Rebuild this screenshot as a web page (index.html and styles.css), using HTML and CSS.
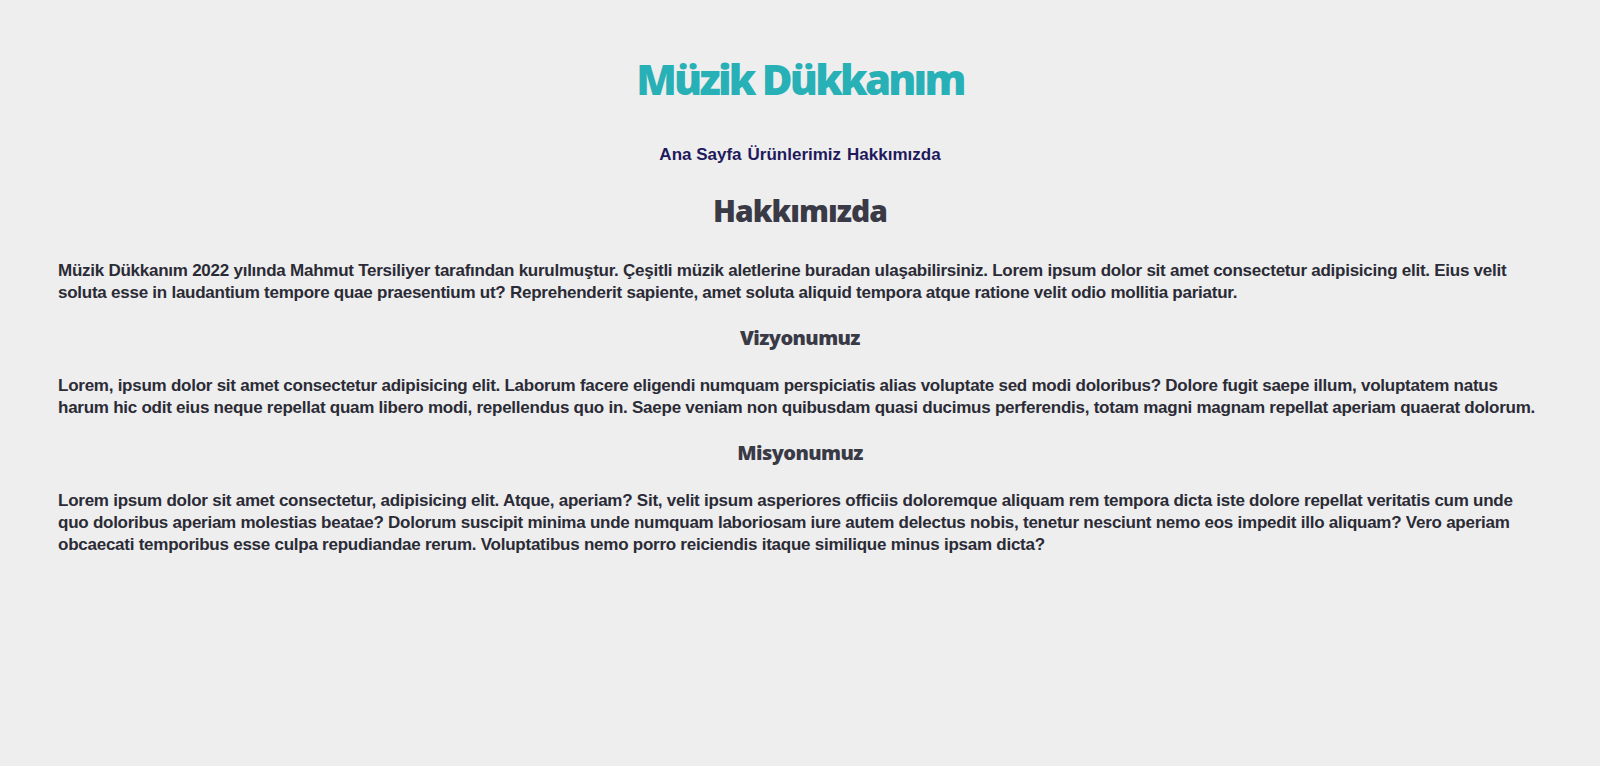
FILE: index.html
```html
<!DOCTYPE html>
<html lang="tr">
<head>
<meta charset="utf-8">
<title>Müzik Dükkanım</title>
<link rel="stylesheet" href="styles.css">
</head>
<body>
<header class="site-header">
  <h1 class="site-title">Müzik Dükkanım</h1>
  <nav class="site-nav">
    <a href="#">Ana Sayfa</a>
    <a href="#">Ürünlerimiz</a>
    <a href="#">Hakkımızda</a>
  </nav>
</header>
<main class="content">
  <h2 class="page-title">Hakkımızda</h2>
  <p class="text">Müzik Dükkanım 2022 yılında Mahmut Tersiliyer tarafından kurulmuştur. Çeşitli müzik aletlerine buradan ulaşabilirsiniz. Lorem ipsum dolor sit amet consectetur adipisicing elit. Eius velit soluta esse in laudantium tempore quae praesentium ut? Reprehenderit sapiente, amet soluta aliquid tempora atque ratione velit odio mollitia pariatur.</p>
  <h3 class="section-title">Vizyonumuz</h3>
  <p class="text">Lorem, ipsum dolor sit amet consectetur adipisicing elit. Laborum facere eligendi numquam perspiciatis alias voluptate sed modi doloribus? Dolore fugit saepe illum, voluptatem natus harum hic odit eius neque repellat quam libero modi, repellendus quo in. Saepe veniam non quibusdam quasi ducimus perferendis, totam magni magnam repellat aperiam quaerat dolorum.</p>
  <h3 class="section-title">Misyonumuz</h3>
  <p class="text">Lorem ipsum dolor sit amet consectetur, adipisicing elit. Atque, aperiam? Sit, velit ipsum asperiores officiis doloremque aliquam rem tempora dicta iste dolore repellat veritatis cum unde quo doloribus aperiam molestias beatae? Dolorum suscipit minima unde numquam laboriosam iure autem delectus nobis, tenetur nesciunt nemo eos impedit illo aliquam? Vero aperiam obcaecati temporibus esse culpa repudiandae rerum. Voluptatibus nemo porro reiciendis itaque similique minus ipsam dicta?</p>
</main>
</body>
</html>
```

FILE: styles.css
```css
html, body {
  background: #eeeeee;
}
body {
  margin: 8px;
  font-family: "Liberation Sans", Arial, sans-serif;
  font-weight: bold;
  color: #2b2b36;
}
.site-header {
  display: flex;
  flex-direction: column;
  align-items: center;
}
.site-title {
  margin: 43px 0 0;
  font-family: "Open Sans", sans-serif;
  font-weight: 800;
  font-size: 42px;
  line-height: 56px;
  letter-spacing: -2.8px;
  color: #27b0b6;
}
.site-nav {
  margin-top: 37px;
  display: flex;
  gap: 6px;
  font-size: 17px;
  line-height: 22px;
  letter-spacing: 0;
}
.site-nav a {
  color: #1e1a5c;
  text-decoration: none;
}
.content {
  padding: 0 50px;
}
.page-title {
  margin: 25px 0 0;
  text-align: center;
  font-family: "Open Sans", sans-serif;
  font-weight: 800;
  font-size: 30px;
  line-height: 40px;
  letter-spacing: -1px;
  color: #393a46;
}
.section-title {
  margin: 20px 0 0;
  text-align: center;
  font-family: "Open Sans", sans-serif;
  font-weight: 800;
  font-size: 20px;
  line-height: 28px;
  letter-spacing: -0.6px;
  color: #393a46;
}
.section-title + .text {
  margin-top: 23px;
}
.text {
  margin: 23px 0 0;
  font-size: 17px;
  line-height: 22px;
  letter-spacing: -0.25px;
}
.text + .section-title {
  margin-top: 20px;
}
.page-title + .text {
  margin-top: 29px;
}
```
